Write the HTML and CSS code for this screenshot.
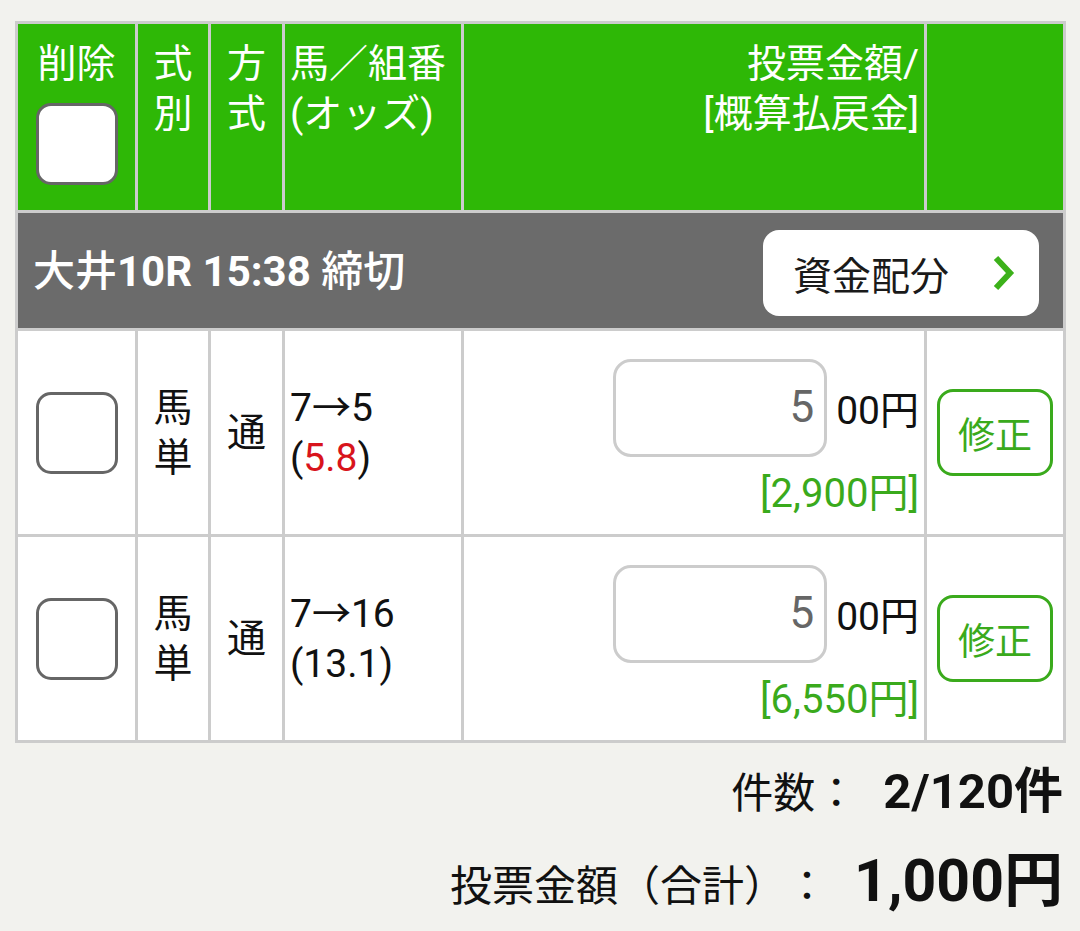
FILE: index.html
```html
<!DOCTYPE html>
<html lang="ja">
<head>
<meta charset="utf-8">
<link rel="stylesheet" href="styles.css">
</head>
<body>
<div class="wrap">
  <table class="bets">
    <colgroup>
      <col class="c1"><col class="c2"><col class="c3"><col class="c4"><col class="c5"><col class="c6">
    </colgroup>
    <thead>
      <tr class="head">
        <th class="center">削除<span class="cb cb-head"></span></th>
        <th class="center">式<br>別</th>
        <th class="center">方<br>式</th>
        <th class="left">馬／組番<br>(オッズ)</th>
        <th class="right">投票金額/<br>[概算払戻金]</th>
        <th></th>
      </tr>
    </thead>
    <tbody>
      <tr class="race">
        <td colspan="6">
          <div class="race-inner">
            <div class="race-title">大井<b>10R 15:38</b> 締切</div>
            <button class="alloc">資金配分<svg class="chev" width="22" height="36" viewBox="0 0 22 36"><path d="M3 3 L17 18 L3 33" fill="none" stroke="#3cb11a" stroke-width="6"/></svg></button>
          </div>
        </td>
      </tr>
      <tr class="bet">
        <td class="center"><span class="cb"></span></td>
        <td class="center">馬<br>単</td>
        <td class="center">通</td>
        <td class="left">7→5<br>(<span class="red">5.8</span>)</td>
        <td class="right money">
          <div class="amount"><span class="input">5</span><span class="unit">00円</span></div>
          <div class="payout">[2,900円]</div>
        </td>
        <td class="center"><button class="fix">修正</button></td>
      </tr>
      <tr class="bet">
        <td class="center"><span class="cb"></span></td>
        <td class="center">馬<br>単</td>
        <td class="center">通</td>
        <td class="left">7→16<br>(13.1)</td>
        <td class="right money">
          <div class="amount"><span class="input">5</span><span class="unit">00円</span></div>
          <div class="payout">[6,550円]</div>
        </td>
        <td class="center"><button class="fix">修正</button></td>
      </tr>
    </tbody>
  </table>
  <div class="summary">
    <div class="sum-row count"><span class="label">件数：</span><span class="val">2/120件</span></div>
    <div class="sum-row total"><span class="label">投票金額（合計）：</span><span class="val">1,000円</span></div>
  </div>
</div>
</body>
</html>
```
FILE: styles.css
```css
html, body {
  margin: 0;
  padding: 0;
}
body {
  background: #f2f2ee;
  font-family: Roboto, "Noto Sans CJK JP", sans-serif;
  color: #111;
  text-spacing-trim: space-all;
}
.wrap {
  padding: 21px 17px 0 15px;
}
.bets {
  width: 1048px;
  border-collapse: collapse;
  table-layout: fixed;
}
.c1 { width: 120px; }
.c2 { width: 73px; }
.c3 { width: 74px; }
.c4 { width: 179px; }
.c5 { width: 463px; }
.c6 { width: 139px; }
.bets th,
.bets td {
  border: 3px solid #cccccc;
  padding: 0;
  font-size: 39px;
  line-height: 50px;
}
.head th {
  background: #2eb806;
  color: #fff;
  font-weight: 400;
  vertical-align: top;
  height: 171px;
  padding-top: 15px;
}
.center { text-align: center; }
.left { text-align: left; padding-left: 5px !important; }
.right { text-align: right; padding-right: 5px !important; }

.cb {
  display: block;
  width: 82px;
  height: 82px;
  box-sizing: border-box;
  border: 3px solid #666;
  border-radius: 15px;
  background: #fff;
  margin: 0 auto;
}
.cb-head {
  margin-top: 14px;
}

.race td {
  background: #6b6b6b;
  height: 115px;
  padding: 0 24px 0 15px;
}
.race-inner {
  display: flex;
  align-items: center;
  justify-content: space-between;
}
.race-title {
  color: #fff;
  font-weight: 500;
  font-size: 42px;
  margin-top: 2px;
}
.race-title b {
  font-weight: 700;
}
.alloc {
  display: flex;
  align-items: center;
  width: 276px;
  height: 86px;
  background: #fff;
  border: none;
  border-radius: 16px;
  padding: 0 24px 0 30px;
  font-family: inherit;
  font-size: 39px;
  color: #1a1a1a;
  justify-content: space-between;
  margin-top: 4px;
}
.chev {
  display: block;
}

.bet td {
  background: #fff;
  height: 203px;
  vertical-align: middle;
}
.bet td.money {
  padding-top: 13px;
  height: 190px;
}
.red { color: #d8141c; }
.amount {
  display: flex;
  justify-content: flex-end;
  align-items: center;
  gap: 9px;
}
.input {
  display: block;
  width: 214px;
  height: 98px;
  box-sizing: border-box;
  border: 3px solid #cccccc;
  border-radius: 18px;
  text-align: right;
  padding-right: 10px;
  font-size: 44px;
  line-height: 90px;
  color: #666;
}
.unit {
  font-size: 39px;
  padding-top: 6px;
}
.payout {
  color: #3aaa1c;
  font-size: 40px;
  margin-top: 12px;
}
.fix {
  width: 116px;
  height: 87px;
  background: #fff;
  border: 3px solid #3aaa1c;
  border-radius: 16px;
  color: #3aaa1c;
  font-family: inherit;
  font-size: 37px;
  padding: 0;
  display: block;
  margin: 0 auto;
}

.summary {
  padding: 8px 0 0 0;
}
.sum-row {
  display: flex;
  justify-content: flex-end;
  align-items: baseline;
}
.count .label {
  font-size: 42px;
  margin-right: 26px;
}
.count .val {
  font-size: 49px;
  font-weight: 700;
}
.total {
  margin-top: 11px;
}
.total .label {
  font-size: 42px;
  margin-right: 26px;
}
.total .val {
  font-size: 59px;
  font-weight: 700;
}
```
